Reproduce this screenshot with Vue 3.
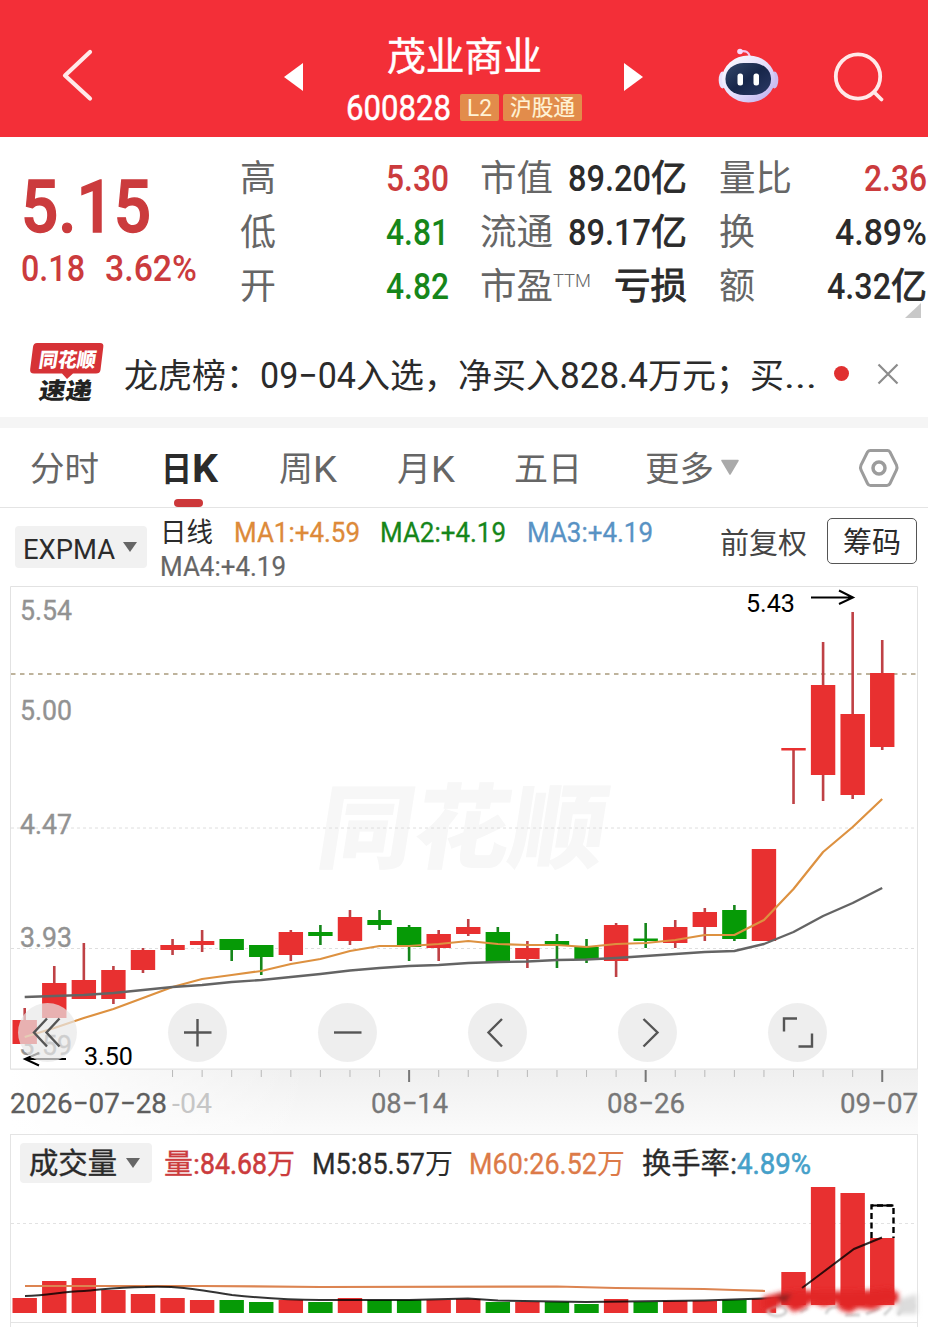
<script setup>
import { h } from 'vue'

const SANS = '"Roboto", "Noto Sans CJK SC", sans-serif'

// Text fitted to a fixed advance width, with an explicit baseline
const Fit = (p) => {
  const stroke = p.k ? { stroke: p.c, 'stroke-width': p.k } : {}
  return h('svg', { width: p.w, height: p.h, class: 'fit' }, [
    h('text', {
      x: 0, y: p.b, fill: p.c, 'font-size': p.s, 'font-weight': p.fw || 400,
      'font-family': SANS, textLength: p.w, lengthAdjust: 'spacingAndGlyphs', ...stroke,
    }, p.t),
  ])
}
Fit.props = ['t', 'w', 'h', 'b', 's', 'c', 'fw', 'k']

const RED = '#cb3b3d'
const GREEN = '#16861a'
const INK = '#2b2b2b'
const GREY = '#666'

const quotes = [
  [
    { l: '高', lw: 36, v: [['5.30', 63]], c: RED },
    { l: '低', lw: 36, v: [['4.81', 63]], c: GREEN },
    { l: '开', lw: 36, v: [['4.82', 63]], c: GREEN },
  ],
  [
    { l: '市值', lw: 73, v: [['89.20', 83], ['亿', 36]], c: INK },
    { l: '流通', lw: 73, v: [['89.17', 83], ['亿', 36]], c: INK },
    { l: '市盈', lw: 73, sup: 'TTM', v: [['亏损', 73]], c: INK },
  ],
  [
    { l: '量比', lw: 73, v: [['2.36', 63]], c: RED },
    { l: '换', lw: 36, v: [['4.89%', 92]], c: INK },
    { l: '额', lw: 36, v: [['4.32', 64], ['亿', 36]], c: INK },
  ],
]
const isHan = (s) => /[亿亏]/.test(s)

const news = [['龙虎榜：', 136], ['09−04', 96], ['入选，', 102], ['净买入', 102], ['828.4', 88], ['万元；', 102], ['买', 34], ['...', 33]]

const step = 29.57
const cx = (i) => 24.7 + i * step

// [colour, high, bodyTop, bodyBottom, low]
const candles = [
  ['r', 1008, 1020, 1044, 1044], ['r', 966, 983, 1018, 1018], ['r', 943, 980, 999, 999],
  ['r', 966, 970, 999, 1004], ['r', 948, 950, 970, 973], ['r', 939, 945, 950, 955],
  ['r', 930, 941, 945, 952], ['g', 939, 939, 950, 961], ['g', 945, 945, 957, 975],
  ['r', 930, 932, 955, 961], ['g', 925, 932, 936, 945], ['r', 910, 917, 941, 945],
  ['g', 910, 920, 925, 930], ['g', 925, 927, 947, 961], ['r', 930, 934, 948, 961],
  ['r', 919, 927, 934, 936], ['g', 927, 932, 962, 962], ['r', 941, 948, 959, 968],
  ['g', 934, 941, 946, 968], ['g', 939, 947, 960, 963], ['r', 923, 925, 961, 977],
  ['g', 923, 938.5, 941, 948], ['r', 920, 927, 943, 948], ['r', 908, 912, 927, 941],
  ['g', 905, 910, 939, 941], ['r', 849, 849, 941, 941], ['r', 748, 748, 750.5, 804],
  ['r', 642, 685, 775, 801], ['r', 612, 714, 795, 799], ['r', 640, 673, 747, 750],
]
const volTops = [1298, 1281, 1278, 1290, 1294, 1298, 1300, 1300, 1302, 1300, 1302, 1298, 1300, 1300, 1300, 1299, 1302, 1302, 1302, 1304, 1299, 1302, 1301, 1301, 1300, 1299, 1272, 1187, 1193, 1238]

const fill = (k) => (k === 'r' ? '#e83030' : '#069a06')
const toLine = (ys) => ys.map((y, i) => `${cx(i).toFixed(1)},${y}`).join(' ')
const fastLine = toLine([1037, 1028, 1018, 1009, 998, 987, 979, 975, 971, 964, 959, 951, 946, 946, 944, 941, 944, 945, 945, 947, 944, 943, 940, 935, 935, 920, 889, 852, 827, 799])
const slowLine = toLine([997, 996, 995, 993, 990, 987, 985, 982, 980, 977, 974, 970.5, 968, 966, 965, 963, 962, 961.5, 960, 959.5, 958, 956, 954, 952, 951, 944, 932, 916, 903, 888])

const prices = [['5.54', 620], ['5.00', 720], ['4.47', 834], ['3.93', 947], ['3.59', 1055]]
const ticks = Array.from({ length: 25 }, (_, i) => ({ x: cx(i + 5), major: i % 8 === 0 && i > 0 }))
const tools = [
  'M29 15.500 16 29.500 29 43.500M41.500 15.500 28.500 29.500 41.500 43.500',
  'M16 29.500h27.500M29.500 16v27.500',
  'M16 29.500h27.500',
  'M34 16 20.500 29.500 34 43.500',
  'M25.500 16 39.500 29.500 25.500 43.500',
  'M16 28.500V15.500H29M44 30.500V43.500H30.500',
]
</script>

<template>
  <main class="page">
    <header class="top">
      <svg class="back" width="36" height="137" viewBox="60 0 36 137"><path d="M90 52 65 75.500 90 98.500" fill="none" stroke="#ffe9e9" stroke-width="4.200" stroke-linecap="round" stroke-linejoin="round" /></svg>
      <svg class="prev" width="20" height="137" viewBox="284 0 20 137"><path d="M303 63V91L284 77Z" fill="#fff" /></svg>
      <div class="title">
        <Fit t="茂业商业" :w="155" :h="83" :b="70" :s="38.500" c="#fff" :k="0.5" />
        <div class="sub">
          <Fit t="600828" :w="105" :h="54" :b="36.500" :s="35" c="#fff" :k="0.5" />
          <span class="badge l2"><Fit t="L2" :w="25" :h="27" :b="21.500" :s="23" c="#fff3d6" /></span>
          <span class="badge hgt"><Fit t="沪股通" :w="65" :h="27" :b="21" :s="22" c="#fff3d6" :k="0.2" /></span>
        </div>
      </div>
      <svg class="next" width="20" height="137" viewBox="624 0 20 137"><path d="M624 63V91L643 77Z" fill="#fff" /></svg>
      <svg class="robot" width="62" height="137" viewBox="718 0 62 137">
        <defs>
          <linearGradient id="shell" x1="0" y1="0" x2="1" y2="1"><stop offset="0" stop-color="#fff" /><stop offset=".55" stop-color="#e2dcfb" /><stop offset="1" stop-color="#b9a8ea" /></linearGradient>
          <linearGradient id="visor" x1="0" y1="0" x2="1" y2="1"><stop offset="0" stop-color="#34486a" /><stop offset=".5" stop-color="#17264a" /><stop offset="1" stop-color="#2b3965" /></linearGradient>
        </defs>
        <path d="M740 51.500Q748.500 49.500 750 57" fill="none" stroke="#f6c4ee" stroke-width="2.200" />
        <circle cx="740" cy="51.500" r="2.800" fill="#f5d9fb" />
        <ellipse cx="722.500" cy="80" rx="3.800" ry="8.500" fill="#e9e2fb" />
        <ellipse cx="774.500" cy="80" rx="3.800" ry="8.500" fill="#cdbdf0" />
        <ellipse cx="748.500" cy="79" rx="26.500" ry="23.500" fill="url(#shell)" />
        <rect x="725.500" y="63" width="45.500" height="32" rx="18" ry="15.500" fill="url(#visor)" />
        <rect x="737.500" y="73.500" width="5.500" height="12" rx="2.500" fill="#fff" />
        <rect x="753.500" y="73.500" width="5.500" height="12" rx="2.500" fill="#fff" />
      </svg>
      <svg class="search" width="54" height="137" viewBox="832 0 54 137"><g fill="none" stroke="#ffe9e9" stroke-width="3.800" stroke-linecap="round"><circle cx="858" cy="76.500" r="22.200" /><path d="M874.500 92.500 881.500 99.500" /></g></svg>
    </header>

    <section class="quote">
      <div class="last">
        <Fit t="5.15" :w="130" :h="106" :b="95" :s="72" :c="RED" fw="500" :k="1.4" />
        <div class="delta">
          <Fit t="0.18" :w="64" :h="50" :b="38" :s="36" :c="RED" fw="500" />
          <Fit t="3.62%" :w="92" :h="50" :b="38" :s="36" :c="RED" fw="500" />
        </div>
      </div>
      <div v-for="(col, ci) in quotes" :key="ci" class="col" :class="'c' + ci">
        <div v-for="q in col" :key="q.l" class="pair">
          <Fit :t="q.l" :w="q.lw" :h="54" :b="37" :s="36.500" :c="GREY" />
          <Fit v-if="q.sup" :t="q.sup" :w="38" :h="54" :b="24.500" :s="18" :c="GREY" fw="300" />
          <span class="val">
            <Fit v-for="v in q.v" :key="v[0]" :t="v[0]" :w="v[1]" :h="54" :b="37" :s="36.500" :c="q.c" :fw="isHan(v[0]) ? 400 : 500" :k="isHan(v[0]) ? 0.9 : 0" />
          </span>
        </div>
      </div>
      <svg class="corner" width="16" height="15"><path d="M16 0V15H0Z" fill="#c8c8c8" /></svg>
    </section>

    <section class="news">
      <svg class="logo" width="76" height="62" viewBox="29 343 76 62">
        <path d="M37 344H100Q104 344 103.300 348L100.500 371Q100 374.500 96 374.500H73L67 380 62 374.500H34Q29.500 374.500 30.200 370L33 348Q33.500 344 37 344Z" fill="#d63236" />
        <text transform="translate(38 367.500) skewX(-9)" font-size="20" font-weight="900" font-family="Noto Sans CJK SC, sans-serif" textLength="57" lengthAdjust="spacingAndGlyphs" fill="#fff">同花顺</text>
        <text transform="translate(38 400) skewX(-9)" font-size="23" font-weight="900" font-family="Noto Sans CJK SC, sans-serif" textLength="53" lengthAdjust="spacingAndGlyphs" fill="#222">速递</text>
      </svg>
      <div class="line"><Fit v-for="n in news" :key="n[0]" :t="n[0]" :w="n[1]" :h="60" :b="44.500" :s="/[0-9]/.test(n[0]) ? 36 : 34" :c="INK" /></div>
      <i class="dot"></i>
      <svg class="close" width="22" height="22"><path d="M1.500 1.500 20.500 20.500M20.500 1.500 1.500 20.500" stroke="#8c8c8c" stroke-width="2.200" /></svg>
    </section>

    <nav class="tabs">
      <Fit class="t0" t="分时" :w="69" :h="79" :b="53" :s="34.500" :c="GREY" />
      <span class="active"><Fit t="日" :w="31" :h="79" :b="53" :s="34" :c="INK" fw="700" /><Fit t="K" :w="26" :h="79" :b="54" :s="38" :c="INK" fw="700" /></span>
      <span class="t2"><Fit t="周" :w="34" :h="79" :b="53" :s="34.500" :c="GREY" /><Fit t="K" :w="24" :h="79" :b="54" :s="37" :c="GREY" /></span>
      <span class="t3"><Fit t="月" :w="34" :h="79" :b="53" :s="34.500" :c="GREY" /><Fit t="K" :w="24" :h="79" :b="54" :s="37" :c="GREY" /></span>
      <Fit class="t4" t="五日" :w="68" :h="79" :b="53" :s="34.500" :c="GREY" />
      <Fit class="t5" t="更多" :w="69" :h="79" :b="53" :s="34.500" :c="GREY" />
      <svg class="tri" width="18" height="79"><path d="M1 32.500H17L9 46Z" fill="#aaa" stroke="#aaa" stroke-width="1.500" stroke-linejoin="round" /></svg>
      <svg class="hex" width="42" height="79"><g fill="none" stroke="#9c9c9c"><path d="M12.500 22.500H29.500Q31 22.500 32 24L38.500 37Q39.500 39.500 38.500 42L32 55.500Q31 57.500 29 57.500H12.500Q10.500 57.500 9.500 55.500L3 42Q2 39.500 3 37L9.500 24Q10.500 22.500 12.500 22.500Z" stroke-width="3" /><circle cx="21" cy="40" r="6" stroke-width="3.500" /></g></svg>
    </nav>

    <section class="indicator">
      <div class="pill expma"><Fit t="EXPMA" :w="92" :h="42" :b="32.500" :s="28.500" :c="INK" /><svg width="16" height="42"><path d="M1 16H15L8 26Z" fill="#666" /></svg></div>
      <div class="ma">
        <Fit t="日线" :w="53" :h="34" :b="26" :s="27" :c="INK" />
        <Fit t="MA1:+4.59" :w="126" :h="34" :b="26" :s="27" c="#dd8a39" :k="0.3" />
        <Fit t="MA2:+4.19" :w="126" :h="34" :b="26" :s="27" c="#16861a" :k="0.3" />
        <Fit t="MA3:+4.19" :w="126" :h="34" :b="26" :s="27" c="#5892c4" :k="0.3" />
        <Fit class="ma4" t="MA4:+4.19" :w="126" :h="34" :b="26" :s="27" :c="GREY" :k="0.2" />
      </div>
      <Fit class="fq" t="前复权" :w="87" :h="46" :b="37" :s="29" c="#444" />
      <div class="chips"><Fit t="筹码" :w="58" :h="43" :b="34" :s="29" :c="INK" /></div>
    </section>

    <section class="kline">
      <svg width="928" height="548" viewBox="0 586 928 548">
        <defs>
          <linearGradient id="axisBg" x1="0" y1="0" x2="0" y2="1"><stop offset="0" stop-color="#efefef" /><stop offset="1" stop-color="#fbfbfb" /></linearGradient>
          <linearGradient id="axisFade" x1="0" y1="0" x2="1" y2="0"><stop offset="0" stop-color="#fff" /><stop offset="1" stop-color="#fff" stop-opacity="0" /></linearGradient>
        </defs>
        <rect x="10" y="1069" width="908" height="65" fill="url(#axisBg)" />
        <rect x="10" y="1070" width="300" height="64" fill="url(#axisFade)" />
        <text transform="translate(314 861) skewX(-9)" font-size="92" font-weight="900" font-family="Noto Sans CJK SC, sans-serif" textLength="288" lengthAdjust="spacingAndGlyphs" fill="#f7f7f7">同花顺</text>
        <path d="M10.500 1069V586.500H917.500V1069Z" fill="none" stroke="#e2e2e2" />
        <path d="M11 828H917M11 948.500H917" stroke="#dedede" stroke-dasharray="3 3" />
        <path d="M11 674H917" stroke="#a99a7c" stroke-width="1.500" stroke-dasharray="4.500 4.500" />
        <g :font-family="SANS" font-size="28" fill="#929292" stroke="#929292" stroke-width=".4">
          <text v-for="p in prices" :key="p[0]" x="20" :y="p[1]" textLength="52" lengthAdjust="spacingAndGlyphs">{{ p[0] }}</text>
        </g>
        <g v-for="(k, i) in candles" :key="i" :fill="fill(k[0])">
          <rect :x="cx(i) - 1.300" :y="k[1]" width="2.600" :height="k[4] - k[1]" :fill="k[0] === 'r' ? '#bf4145' : '#15861a'" />
          <rect :x="cx(i) - 12.200" :y="k[2]" width="24.400" :height="k[3] - k[2]" />
        </g>
        <g fill="none" stroke-linejoin="round">
          <polyline :points="fastLine" stroke="#dd9140" stroke-width="2.200" />
          <polyline :points="slowLine" stroke="#646464" stroke-width="2.400" />
        </g>
        <g fill="none" stroke="#000" stroke-width="2">
          <path d="M811 597.500H853M839 590.500 853 597.500 839 604" />
          <path d="M66 1059H25M39 1053 25 1059 39 1065.500" />
        </g>
        <g :font-family="SANS" font-size="26.500">
          <text x="746" y="612" textLength="49" lengthAdjust="spacingAndGlyphs">5.43</text>
          <text x="84" y="1065" textLength="49" lengthAdjust="spacingAndGlyphs">3.50</text>
        </g>
        <rect v-for="t in ticks" :key="t.x" :x="t.x - (t.major ? 1 : 0.5)" y="1070" :width="t.major ? 2 : 1" :height="t.major ? 12 : 7" :fill="t.major ? '#777' : '#b9b9b9'" />
        <g :font-family="SANS" font-size="28" fill="#777" stroke="#777" stroke-width=".3">
          <text x="10" y="1113" textLength="157" lengthAdjust="spacingAndGlyphs" fill="#5e5e5e" stroke="#5e5e5e">2026−07−28</text>
          <text x="172" y="1113" textLength="40" lengthAdjust="spacingAndGlyphs" fill="#c6c6c6" stroke="none">-04</text>
          <text x="371" y="1113" textLength="77" lengthAdjust="spacingAndGlyphs">08−14</text>
          <text x="607" y="1113" textLength="78" lengthAdjust="spacingAndGlyphs">08−26</text>
          <text x="840" y="1113" textLength="78" lengthAdjust="spacingAndGlyphs">09−07</text>
        </g>
      </svg>
      <div class="tools">
        <button v-for="d in tools" :key="d"><svg width="59" height="59"><path :d="d" fill="none" stroke="#555" stroke-width="2.400" /></svg></button>
      </div>
    </section>

    <section class="volume">
      <div class="vhead">
        <div class="pill vol"><Fit t="成交量" :w="88" :h="40" :b="31" :s="29" :c="INK" :k="0.4" /><svg width="16" height="40"><path d="M1 15H15L8 25Z" fill="#666" /></svg></div>
        <span class="v1"><Fit t="量:" :w="36" :h="40" :b="30.500" :s="28.500" :c="RED" :k="0.3" /><Fit t="84.68" :w="67" :h="40" :b="31" :s="29.500" :c="RED" :k="0.6" /><Fit t="万" :w="28" :h="40" :b="30.500" :s="28.500" :c="RED" :k="0.3" /></span>
        <span class="v2"><Fit t="M5:85.57" :w="113" :h="40" :b="31" :s="29.500" :c="INK" :k="0.3" /><Fit t="万" :w="28" :h="40" :b="30.500" :s="28.500" :c="INK" /></span>
        <span class="v3"><Fit t="M60:26.52" :w="128" :h="40" :b="31" :s="29.500" c="#dc7a48" :k="0.3" /><Fit t="万" :w="28" :h="40" :b="30.500" :s="28.500" c="#dc7a48" /></span>
        <span class="v4"><Fit t="换手率:" :w="95" :h="40" :b="31" :s="29" :c="INK" :k="0.3" /><Fit t="4.89%" :w="74" :h="40" :b="31" :s="29.500" c="#45a0c9" :k="0.6" /></span>
      </div>
      <svg width="928" height="144" viewBox="0 1183 928 144">
        <defs>
          <filter id="soft" x="-20%" y="-60%" width="140%" height="220%"><feGaussianBlur stdDeviation="2.500" /></filter>
          <filter id="haze" x="-20%" y="-60%" width="140%" height="220%"><feGaussianBlur stdDeviation="1" /></filter>
        </defs>
        <path d="M11 1223.500H917" stroke="#e2e2e2" stroke-dasharray="3 3" />
        <path d="M10.500 1183V1327M917.500 1183V1327M10 1322.500H917" stroke="#e4e4e4" />
        <rect v-for="(v, i) in volTops" :key="i" :x="cx(i) - 12.200" :y="v" width="24.400" :height="(i > 25 ? 1305 : 1313) - v" :fill="fill(candles[i][0])" />
        <path d="M871.500 1238V1205.500H893.500V1238" fill="none" stroke="#000" stroke-width="2.400" stroke-dasharray="6 3.500" />
        <path d="M871.500 1205.500H893.500" stroke="#000" stroke-width="2" />
        <polyline points="25,1286 200,1286 320,1287 557,1286.500 616,1288 704,1289 734,1290 765,1291" fill="none" stroke="#dc8451" stroke-width="2.200" />
        <path d="M25 1296C50 1295 60 1292 84 1291C100 1290 115 1287 145 1287C175 1286 190 1288 232 1295C270 1299 290 1300 320 1300L409 1300 468 1298.500 498 1300.500 586 1302 704 1300.500 763 1298.500 785 1298M802 1288 854 1249 882 1237.500" fill="none" stroke="#000" stroke-opacity=".8" stroke-width="2" />
        <g filter="url(#haze)" fill="none" stroke="#d2d2d2" stroke-width="3">
          <ellipse cx="777" cy="1311" rx="9" ry="5" />
          <path d="M800 1312 808 1308M826 1314Q828 1306 839 1307M845 1315H860M866 1314 880 1308M884 1315 892 1307M898 1315 906 1304M903 1306H915" />
        </g>
        <g filter="url(#soft)">
          <path d="M900 1299 917 1294V1314H896Z" fill="#dcdcdc" />
          <path d="M763 1297 782 1292 800 1290 822 1291 850 1291 872 1290 890 1288 899 1294 899 1303 885 1304 873 1310 858 1308 850 1313 840 1310 836 1302 824 1307 812 1302 803 1309 793 1312 784 1303 768 1311 763 1308Z" fill="#e22528" />
          <path d="M776 1296 792 1294 784 1303Z" fill="#7c2024" />
        </g>
      </svg>
    </section>
  </main>
</template>

<style>
body { margin: 0; background: #fff; }
.fit { display: block; flex: none; overflow: visible; }
</style>

<style scoped>
.page { width: 928px; height: 1327px; overflow: hidden; background: #fff; font-family: "Roboto", "Noto Sans CJK SC", sans-serif; }
.page svg { display: block; flex: none; }
.top { display: flex; height: 137px; background: #f32f38; }
.back { margin-left: 60px; }
.prev { margin-left: 188px; }
.title { width: 236px; margin-left: 42px; display: flex; flex-direction: column; align-items: center; }
.sub { display: flex; width: 236px; }
.badge { display: flex; justify-content: center; height: 27px; margin-top: 11px; border-radius: 2px; background: #e28c4b; }
.l2 { width: 39px; margin-left: 9px; }
.hgt { width: 79px; margin-left: 4px; }
.next { margin-left: 42px; }
.robot { margin-left: 74px; }
.search { margin-left: 52px; }

.quote { position: relative; display: flex; height: 188px; }
.last { width: 219px; padding-left: 21px; }
.delta { display: flex; gap: 20px; }
.col { padding-top: 17px; }
.c0 { width: 209px; }
.c1 { width: 207px; margin-left: 31px; }
.c2 { width: 208px; margin-left: 32px; }
.pair { display: flex; height: 54px; }
.val { display: flex; margin-left: auto; }
.corner { position: absolute; left: 905px; top: 166px; }

.news { display: flex; align-items: center; height: 92px; border-bottom: 11px solid #f5f5f5; }
.logo { margin: 4px 0 0 29px; }
.line { display: flex; width: 693px; margin: 4px 0 0 19px; }
.dot { width: 15px; height: 15px; border-radius: 50%; background: #e03030; margin: 5px 0 0 17px; }
.close { margin: 6px 0 0 28px; }

.tabs { display: flex; box-sizing: border-box; height: 80px; border-bottom: 1px solid #e4e4e4; }
.tabs span { display: flex; }
.t0 { margin-left: 30px; }
.active { position: relative; margin-left: 62px; }
.active::after { content: ""; position: absolute; left: 13px; top: 71px; width: 29px; height: 8px; border-radius: 4px; background: #cc383a; }
.t2 { margin-left: 61px; }
.t3 { margin-left: 60px; }
.t4 { margin-left: 59px; }
.t5 { margin-left: 63px; }
.tri { margin-left: 7px; }
.hex { margin-left: 119px; }

.indicator { display: flex; height: 78px; }
.pill { display: flex; flex: none; box-sizing: border-box; border-radius: 4px; background: #f1f1f1; }
.expma { width: 132px; height: 42px; margin: 18px 0 0 15px; padding-left: 8px; gap: 7px; }
.ma { display: flex; flex-wrap: wrap; align-content: flex-start; column-gap: 20.500px; width: 540px; margin: 8px 0 0 13px; }
.fq { margin: 9px 0 0 20px; }
.chips { display: flex; justify-content: center; box-sizing: border-box; width: 90px; height: 46px; margin: 10px 0 0 20px; border: 1.500px solid #555; border-radius: 5px; }

.kline { position: relative; height: 548px; }
.tools { position: absolute; left: 17.500px; top: 417px; display: flex; gap: 91px; }
.tools button { width: 59px; height: 59px; padding: 0; border: 0; border-radius: 50%; background: rgba(236, 236, 236, .88); }
.tools button:first-child { background: rgba(232, 232, 232, .7); }

.volume { height: 193px; }
.vhead { display: flex; box-sizing: border-box; height: 49px; margin: 0 10px; padding-top: 8px; border: solid #e4e4e4; border-width: 1px 1px 0; }
.vhead span { display: flex; }
.vol { width: 132px; height: 40px; margin-left: 9px; padding-left: 9px; gap: 8px; }
.v1 { margin-left: 12px; }
.v2 { margin-left: 17px; }
.v3 { margin-left: 16px; }
.v4 { margin-left: 17px; }
</style>
